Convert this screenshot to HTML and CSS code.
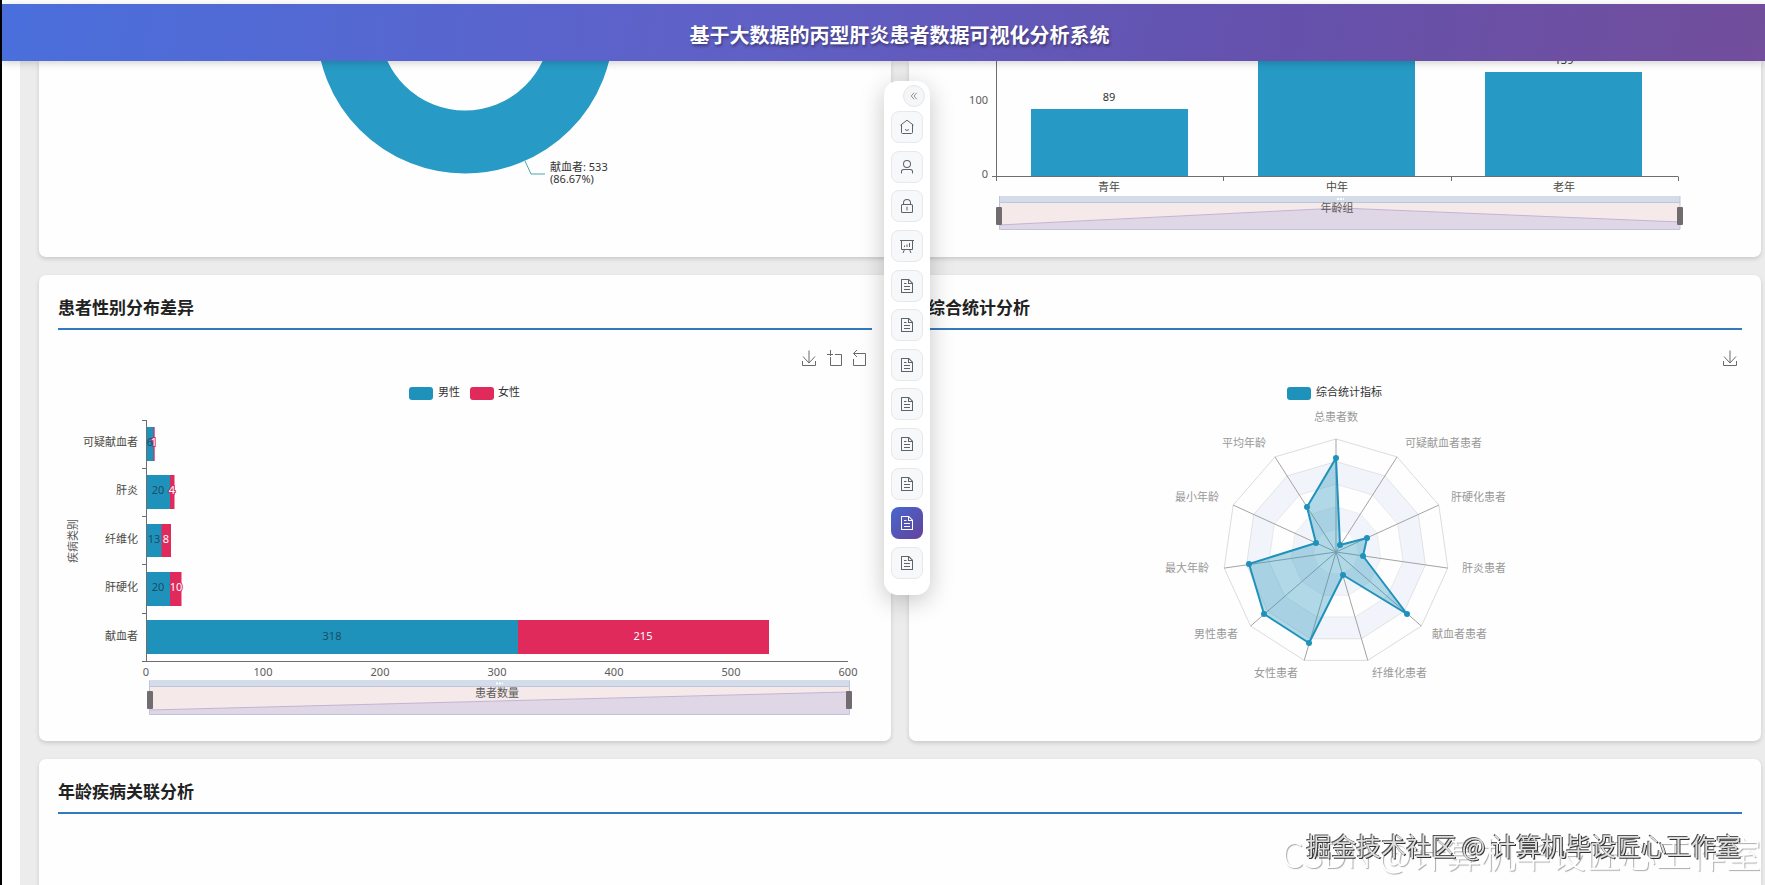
FILE: index.html
```html
<!DOCTYPE html>
<html lang="zh-CN">

<head>
	<meta charset="UTF-8">
	<meta name="viewport" content="width=device-width, initial-scale=1.0">
	<title>基于大数据的丙型肝炎患者数据可视化分析系统</title>
	<link rel="stylesheet" href="styles.css">
</head>

<body>
	<!-- 公用图标 -->
	<svg class="sprite" width="0" height="0">
		<defs>
			<symbol id="icon-doc" viewBox="0 0 1024 1024">
				<path d="M832 384H576V128H192v768h640zm-26.496-64L640 154.496V320zM160 64h480l256 256v608a32 32 0 0 1-32 32H160a32 32 0 0 1-32-32V96a32 32 0 0 1 32-32m160 448h384v64H320zm0-192h160v64H320zm0 384h384v64H320z" />
			</symbol>
			<symbol id="icon-user" viewBox="0 0 1024 1024">
				<path d="M512 512a192 192 0 1 0 0-384 192 192 0 0 0 0 384m0 64a256 256 0 1 1 0-512 256 256 0 0 1 0 512m320 320v-96a96 96 0 0 0-96-96H288a96 96 0 0 0-96 96v96a32 32 0 1 1-64 0v-96a160 160 0 0 1 160-160h448a160 160 0 0 1 160 160v96a32 32 0 1 1-64 0" />
			</symbol>
			<symbol id="icon-lock" viewBox="0 0 1024 1024">
				<path d="M224 448a32 32 0 0 0-32 32v384a32 32 0 0 0 32 32h576a32 32 0 0 0 32-32V480a32 32 0 0 0-32-32zm0-64h576a96 96 0 0 1 96 96v384a96 96 0 0 1-96 96H224a96 96 0 0 1-96-96V480a96 96 0 0 1 96-96" />
				<path d="M512 544a32 32 0 0 1 32 32v192a32 32 0 1 1-64 0V576a32 32 0 0 1 32-32m192-160v-64a192 192 0 1 0-384 0v64zM512 64a256 256 0 0 1 256 256v128H256V320A256 256 0 0 1 512 64" />
			</symbol>
			<symbol id="icon-download" viewBox="0 0 14 16">
				<path d="M7 0.5V13M1 6.5L7 13L13 6.5M0.5 11V15.5H13.5V11" />
			</symbol>
		</defs>
	</svg>

	<header class="header">
		<h1 class="header-title">基于大数据的丙型肝炎患者数据可视化分析系统</h1>
	</header>

	<!-- 悬浮菜单 -->
	<nav class="float-menu">
		<button class="menu-toggle" type="button" aria-label="收起">
			<svg width="8" height="8" viewBox="0 0 10 10">
				<path d="M5 1L1.500 5L5 9M8.500 1L5 5L8.500 9" />
			</svg>
		</button>
		<div class="menu-list">
			<button class="menu-item" type="button" aria-label="首页">
				<svg class="line-icon" viewBox="0 0 16 16">
					<path d="M1.500 6.200L8 1.200L14.500 6.200M2.500 5.600V13.500Q2.500 14.500 3.500 14.500H12.500Q13.500 14.500 13.500 13.500V5.600M6 10.500Q8 12.500 10 10.500" />
				</svg>
			</button>
			<button class="menu-item" type="button" aria-label="用户"><svg><use href="#icon-user" /></svg></button>
			<button class="menu-item" type="button" aria-label="密码"><svg><use href="#icon-lock" /></svg></button>
			<button class="menu-item" type="button" aria-label="看板">
				<svg class="line-icon" viewBox="0 0 16 16">
					<path d="M1 2.500H15M2.500 2.500V11.500H13.500V2.500M5.500 11.500L4 15M10.500 11.500L12 15M5.500 9V7.500M8 9V6.500M10.500 9V5" />
				</svg>
			</button>
			<button class="menu-item" type="button" aria-label="图表一"><svg><use href="#icon-doc" /></svg></button>
			<button class="menu-item" type="button" aria-label="图表二"><svg><use href="#icon-doc" /></svg></button>
			<button class="menu-item" type="button" aria-label="图表三"><svg><use href="#icon-doc" /></svg></button>
			<button class="menu-item" type="button" aria-label="图表四"><svg><use href="#icon-doc" /></svg></button>
			<button class="menu-item" type="button" aria-label="图表五"><svg><use href="#icon-doc" /></svg></button>
			<button class="menu-item" type="button" aria-label="图表六"><svg><use href="#icon-doc" /></svg></button>
			<button class="menu-item active" type="button" aria-label="图表七"><svg><use href="#icon-doc" /></svg></button>
			<button class="menu-item" type="button" aria-label="图表八"><svg><use href="#icon-doc" /></svg></button>
		</div>
	</nav>

	<main class="content">
		<div class="grid">
			<!-- 疾病类别占比 -->
			<section class="card card-top">
				<svg class="chart" viewBox="58 61 814 196">
					<circle class="donut" cx="465" cy="25" r="117" />
					<path class="label-line" d="M525 161L531 174H545" />
					<text class="dark" x="550" y="168">献血者: 533</text>
					<text class="dark" x="550" y="180">(86.67%)</text>
				</svg>
			</section>

			<!-- 年龄组分布 -->
			<section class="card card-top">
				<svg class="chart" viewBox="928 61 814 196">
					<g class="bar-light">
						<rect x="1031" y="109" width="157" height="67" />
						<rect x="1258" y="40" width="157" height="136" />
						<rect x="1485" y="72" width="157" height="104" />
					</g>
					<path class="axis" d="M996.500 61V181M992 176.500H1678.500M1223.500 177V181M1451.500 177V181M1678.500 177V181" />
					<g class="dark middle">
						<text x="1109" y="98">89</text>
						<text x="1564" y="61">139</text>
					</g>
					<g class="end">
						<text x="988" y="101">100</text>
						<text x="988" y="175">0</text>
					</g>
					<g class="cat middle">
						<text x="1109" y="188">青年</text>
						<text x="1337" y="188">中年</text>
						<text x="1564" y="188">老年</text>
					</g>
					<rect class="zoom-move" x="999" y="196" width="681" height="7" />
					<rect class="zoom-bg" x="999" y="203" width="681" height="27" />
					<path class="zoom-area" d="M999 225L1340 208L1680 222V229H999Z" />
					<path class="zoom-line" d="M999 225L1340 208L1680 222" />
					<path class="zoom-border" d="M999.500 196V229.500H1680V196M999 202.500H1680" />
					<path class="zoom-dots" d="M1337 199H1344" />
					<rect class="zoom-handle" x="996" y="207" width="6" height="18" rx="1" />
					<rect class="zoom-handle" x="1677" y="207" width="6" height="18" rx="1" />
					<text class="middle" x="1337" y="209">年龄组</text>
				</svg>
			</section>

			<section class="card">
				<h2 class="card-title">患者性别分布差异</h2>
				<svg class="chart" viewBox="58 330 814 392">
					<g class="tool">
						<use href="#icon-download" x="802" y="350" width="14" height="16" />
						<path d="M827 354.500H833M835 354.500H841.500V365.500H830.500V357M830.500 350V356" />
						<path d="M857 350L853.500 353.500L857 357M853.500 353.500H865.500V365.500H853.500V359" />
					</g>
					<!-- 图例 -->
					<rect class="bar-male" x="409" y="387" width="24" height="13" rx="3" />
					<text class="dark" x="438" y="393">男性</text>
					<rect class="bar-female" x="470" y="387" width="24" height="13" rx="3" />
					<text class="dark" x="498" y="393">女性</text>

					<g class="bar-male">
						<rect x="147" y="427" width="7" height="34" />
						<rect x="147" y="475" width="23" height="34" />
						<rect x="147" y="524" width="15" height="33" />
						<rect x="147" y="572" width="23" height="34" />
						<rect x="147" y="620" width="371" height="34" />
					</g>
					<g class="bar-female">
						<rect x="153.500" y="427" width="1.200" height="34" />
						<rect x="170" y="475" width="4.500" height="34" />
						<rect x="161.500" y="524" width="9.500" height="33" />
						<rect x="170" y="572" width="11.500" height="34" />
						<rect x="518" y="620" width="251" height="34" />
					</g>
					<path class="axis" d="M146.500 420V662M142 420.500H147M142 468.500H147M142 516.500H147M142 564.500H147M142 613.500H147M142 661.500H848" />
					<g class="male-num middle">
						<text x="150" y="443">6</text>
						<text x="158" y="491">20</text>
						<text x="154" y="540">13</text>
						<text x="158" y="588">20</text>
						<text x="332" y="637">318</text>
					</g>
					<g class="female-num middle">
						<text x="154" y="443">1</text>
						<text x="172" y="491">4</text>
						<text x="166" y="540">8</text>
						<text x="176" y="588">10</text>
						<text x="643" y="637">215</text>
					</g>
					<g class="cat end">
						<text x="138" y="443">可疑献血者</text>
						<text x="138" y="491">肝炎</text>
						<text x="138" y="540">纤维化</text>
						<text x="138" y="588">肝硬化</text>
						<text x="138" y="637">献血者</text>
					</g>
					<text class="middle" transform="translate(74 541) rotate(-90)">疾病类别</text>
					<g class="middle">
						<text x="146" y="673">0</text>
						<text x="263" y="673">100</text>
						<text x="380" y="673">200</text>
						<text x="497" y="673">300</text>
						<text x="614" y="673">400</text>
						<text x="731" y="673">500</text>
						<text x="848" y="673">600</text>
					</g>
					<rect class="zoom-move" x="149" y="680" width="701" height="7" />
					<rect class="zoom-bg" x="149" y="687" width="701" height="27" />
					<path class="zoom-area" d="M150 710L847 692H850V714H149Z" />
					<path class="zoom-line" d="M150 710L847 692" />
					<path class="zoom-border" d="M149.500 681V714.500H849.500V681M149 686.500H850" />
					<path class="zoom-dots" d="M496 683.500H503" />
					<rect class="zoom-handle" x="147" y="691" width="6" height="18" rx="1" />
					<rect class="zoom-handle" x="846" y="691" width="6" height="18" rx="1" />
					<text class="middle" x="497" y="694">患者数量</text>
				</svg>
			</section>

			<section class="card">
				<h2 class="card-title">综合统计分析</h2>
				<svg class="chart" viewBox="928 330 814 392">
					<defs>
						<polygon id="ring" points="0,-113 61.100,-95.100 102.800,-46.900 111.800,16.100 85.400,74 31.800,108.400 -31.800,108.400 -85.400,74 -111.800,16.100 -102.800,-46.900 -61.100,-95.100" />
					</defs>
					<g class="tool">
						<use href="#icon-download" x="1723" y="350" width="14" height="16" />
					</g>
					<rect class="bar-male" x="1287" y="387" width="24" height="13" rx="3" />
					<text class="dark" x="1316" y="393">综合统计指标</text>

					<!-- 雷达底图 -->
					<g class="radar" transform="translate(1336 552)">
						<use class="ring-white" href="#ring" />
						<use class="ring-tint" href="#ring" transform="scale(.8)" />
						<use class="ring-white" href="#ring" transform="scale(.6)" />
						<use class="ring-tint" href="#ring" transform="scale(.4)" />
						<use class="ring-white" href="#ring" transform="scale(.2)" />
						<path class="spoke" d="M0 0V-113M0 0L61.100 -95.100M0 0L102.800 -46.900M0 0L111.800 16.100M0 0L85.400 74M0 0L31.800 108.400M0 0L-31.800 108.400M0 0L-85.400 74M0 0L-111.800 16.100M0 0L-102.800 -46.900M0 0L-61.100 -95.100" />
					</g>
					<polygon class="radar-area" points="1336,458 1307,507 1316,543 1249,564 1264,614 1309,643 1343,575 1407,614 1363,556 1367,538 1340,545" />
					<g class="radar-dot">
						<circle cx="1336" cy="458" r="3" />
						<circle cx="1307" cy="507" r="3" />
						<circle cx="1316" cy="543" r="3" />
						<circle cx="1249" cy="564" r="3" />
						<circle cx="1264" cy="614" r="3" />
						<circle cx="1309" cy="643" r="3" />
						<circle cx="1343" cy="575" r="3" />
						<circle cx="1407" cy="614" r="3" />
						<circle cx="1363" cy="556" r="3" />
						<circle cx="1367" cy="538" r="3" />
						<circle cx="1340" cy="545" r="3" />
					</g>
					<g class="radar-name">
						<text class="middle" x="1336" y="418">总患者数</text>
						<text x="1405" y="444">可疑献血者患者</text>
						<text x="1451" y="498">肝硬化患者</text>
						<text x="1462" y="569">肝炎患者</text>
						<text x="1432" y="635">献血者患者</text>
						<text x="1372" y="674">纤维化患者</text>
					</g>
					<g class="radar-name end">
						<text x="1266" y="444">平均年龄</text>
						<text x="1219" y="498">最小年龄</text>
						<text x="1209" y="569">最大年龄</text>
						<text x="1238" y="635">男性患者</text>
						<text x="1298" y="674">女性患者</text>
					</g>
				</svg>
			</section>

			<section class="card card-wide">
				<h2 class="card-title">年龄疾病关联分析</h2>
			</section>
		</div>
	</main>

	<div class="watermark watermark-back">CSDN @计算机毕设匠心工作室</div>
	<div class="watermark watermark-front">掘金技术社区 @ 计算机毕设匠心工作室</div>
</body>

</html>
```

FILE: styles.css
```css
* {
	box-sizing: border-box;
}

body {
	margin: 0;
	padding-top: 4px;
	min-height: 100vh;
	display: flex;
	flex-direction: column;
	border-left: 2px solid #000;
	background: #fff;
	font-family: "Noto Sans", "Noto Sans CJK SC", sans-serif;
	color: #222;
}

.sprite {
	position: absolute;
}

/* 顶部标题栏 */
.header {
	position: relative;
	z-index: 5;
	height: 57px;
	padding: 6px 0 0 32px;
	display: flex;
	align-items: center;
	justify-content: center;
	background: linear-gradient(100deg, #4a6fdc 0%, #6060c6 42%, #6452ae 70%, #724e9c 100%);
	box-shadow: 0 2px 8px rgba(0, 0, 0, 0.18);
}

.header-title {
	margin: 0;
	font-size: 20px;
	line-height: 28px;
	font-weight: 700;
	color: #fff;
	text-shadow: 1px 2px 3px rgba(0, 0, 0, 0.4);
}

/* 内容区 */
.content {
	flex: 1;
	display: flex;
	margin-left: 18px;
	padding: 0 4px 0 19px;
	background: #ececec;
}

.grid {
	flex: 1;
	display: grid;
	grid-template-columns: 1fr 1fr;
	grid-template-rows: auto auto 1fr;
	gap: 18px;
}

.card {
	min-width: 0;
	padding: 19px;
	background: #fefefe;
	border-radius: 7px;
	box-shadow: 0 2px 4px rgba(0, 0, 0, 0.15);
}

.card-top {
	padding: 0 19px;
	border-radius: 0 0 7px 7px;
}

.card-wide {
	grid-column: 1 / 3;
	border-radius: 7px 7px 0 0;
}

.card-title {
	margin: 0;
	padding-bottom: 6px;
	border-bottom: 2px solid #3579bd;
	font-size: 17px;
	line-height: 28px;
	font-weight: 700;
}

/* 图表 */
.chart {
	display: block;
	width: 100%;
	height: auto;
	font-size: 11px;
	fill: #5c5c5c;
}

.chart text {
	dominant-baseline: middle;
}

.chart .dark {
	fill: #333;
}

.chart .cat {
	fill: #4a4a44;
}

.middle {
	text-anchor: middle;
}

.end {
	text-anchor: end;
}

.donut {
	fill: none;
	stroke: #279bc5;
	stroke-width: 63px;
}

.label-line {
	fill: none;
	stroke: #4ca5a8;
}

.bar-light {
	fill: #269ac4;
}

.bar-male {
	fill: #1f92bb;
}

.bar-female {
	fill: #df2a5b;
}

.male-num {
	fill: #1b4d66;
}

.female-num {
	fill: #fff;
	stroke: #df2a5b;
	stroke-width: 2px;
	paint-order: stroke;
}

.axis {
	fill: none;
	stroke: #6e6e6e;
}

.tool {
	fill: none;
	stroke: #6a6a6a;
}

.zoom-move {
	fill: #d4dcea;
}

.zoom-bg {
	fill: #f5e9e9;
}

.zoom-area {
	fill: #e0d7e6;
}

.zoom-line {
	fill: none;
	stroke: #c3b4d4;
}

.zoom-border {
	fill: none;
	stroke: #bcc6da;
}

.zoom-dots {
	fill: none;
	stroke: #fff;
	stroke-width: 2px;
	stroke-dasharray: 2 1;
}

.zoom-handle {
	fill: #706c70;
}

.radar use {
	stroke: #dcdcdc;
}

.ring-white {
	fill: #fefefe;
}

.ring-tint {
	fill: #f1f4fa;
}

.spoke {
	fill: none;
	stroke: #a3a3a3;
}

.radar-area {
	fill: rgba(31, 146, 187, 0.35);
	stroke: #1f92bb;
	stroke-width: 2px;
	stroke-linejoin: bevel;
}

.radar-dot {
	fill: #1f92bb;
}

.radar-name {
	fill: #999;
}

/* 悬浮菜单 */
.float-menu {
	position: fixed;
	z-index: 10;
	top: 81px;
	left: 884px;
	width: 46px;
	height: 514px;
	padding: 4px 5px 16px 7px;
	display: flex;
	flex-direction: column;
	align-items: flex-start;
	gap: 4px;
	background: #fff;
	border-radius: 14px;
	box-shadow: 0 6px 24px rgba(0, 0, 0, 0.22);
}

.menu-toggle {
	align-self: flex-end;
	width: 22px;
	height: 22px;
	padding: 0;
	display: flex;
	align-items: center;
	justify-content: center;
	background: #f5f6f7;
	border: 1px solid #e4e6ea;
	border-radius: 50%;
	cursor: pointer;
}

.menu-toggle svg {
	fill: none;
	stroke: #777;
}

.menu-list {
	flex: 1;
	display: flex;
	flex-direction: column;
	justify-content: space-between;
}

.menu-item {
	width: 32px;
	height: 32px;
	padding: 0;
	display: flex;
	align-items: center;
	justify-content: center;
	background: #f7f8fa;
	border: 1px solid #e6e8ec;
	border-radius: 8px;
	cursor: pointer;
}

.menu-item svg {
	width: 16px;
	height: 16px;
	fill: #5f6266;
}

.menu-item .line-icon {
	fill: none;
	stroke: #5f6266;
}

.menu-item:hover {
	background: #eef1f6;
}

.menu-item.active {
	border-color: transparent;
	background: linear-gradient(135deg, #4767cf, #63439b) border-box;
}

.menu-item.active svg {
	fill: #fff;
}

/* 水印 */
.watermark {
	position: fixed;
	z-index: 20;
	font-family: "Noto Sans CJK SC", sans-serif;
	white-space: nowrap;
	color: #fff;
	pointer-events: none;
}

.watermark-back {
	right: 4px;
	bottom: 7px;
	font-size: 35px;
	line-height: 50px;
	font-weight: 300;
	text-shadow: 1px 1px 1px #aaa;
}

.watermark-front {
	right: 24px;
	bottom: 22px;
	font-size: 25px;
	line-height: 36px;
	color: #ddd;
	text-shadow: 1px 1px 0 #333, -1px -1px 0 #555;
}
```
